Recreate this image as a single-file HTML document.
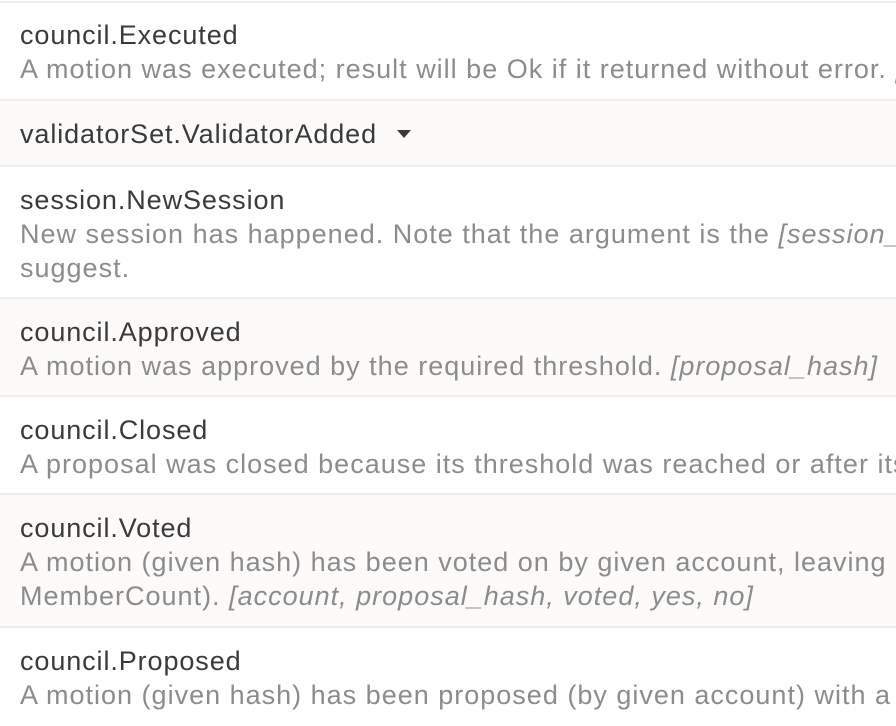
<!DOCTYPE html>
<html><head><style>
body{margin:0;width:896px;height:724px;overflow:hidden;background:#fff;font-family:"Liberation Sans",sans-serif;}
.r{position:absolute;left:0;width:896px;border-top:2px solid #efedeb;box-sizing:border-box;padding-left:20px;white-space:nowrap;overflow:hidden}
.o{background:#fcfbfa}
.t{font-size:27px;letter-spacing:0.9px;line-height:34px;color:#3a3a3a}
.d{font-size:27px;letter-spacing:1.0px;line-height:34px;color:#8c8c8c}
i{font-style:italic}
.car{display:inline-block;width:0;height:0;border-left:7px solid transparent;border-right:7px solid transparent;border-top:8px solid #3a3a3a;margin-left:20px;vertical-align:middle;position:relative;top:-2px}
</style></head><body>
<div class="r" style="top:1px;height:100px;padding-top:15px"><div class="t">council.Executed</div><div class="d">A motion was executed; result will be Ok if it returned without error. <i>[proposal_hash, result]</i></div></div>
<div class="r o" style="top:99px;height:68px;padding-top:16px"><div class="t">validatorSet.ValidatorAdded<span class="car"></span></div></div>
<div class="r" style="top:165px;height:134px;padding-top:16px"><div class="t">session.NewSession</div><div class="d">New session has happened. Note that the argument is the <i>[session_index]</i>, not the block number as the type might</div><div class="d">suggest.</div></div>
<div class="r o" style="top:297px;height:100px;padding-top:16px"><div class="t">council.Approved</div><div class="d">A motion was approved by the required threshold. <i>[proposal_hash]</i></div></div>
<div class="r" style="top:395px;height:100px;padding-top:16px"><div class="t">council.Closed</div><div class="d">A proposal was closed because its threshold was reached or after its duration was up.</div></div>
<div class="r o" style="top:493px;height:135px;padding-top:16px"><div class="t">council.Voted</div><div class="d">A motion (given hash) has been voted on by given account, leaving a tally (yes votes and no votes given respectively as</div><div class="d">MemberCount). <i>[account, proposal_hash, voted, yes, no]</i></div></div>
<div class="r" style="top:626px;height:100px;padding-top:16px"><div class="t">council.Proposed</div><div class="d">A motion (given hash) has been proposed (by given account) with a threshold (given MemberCount).</div></div>
</body></html>
